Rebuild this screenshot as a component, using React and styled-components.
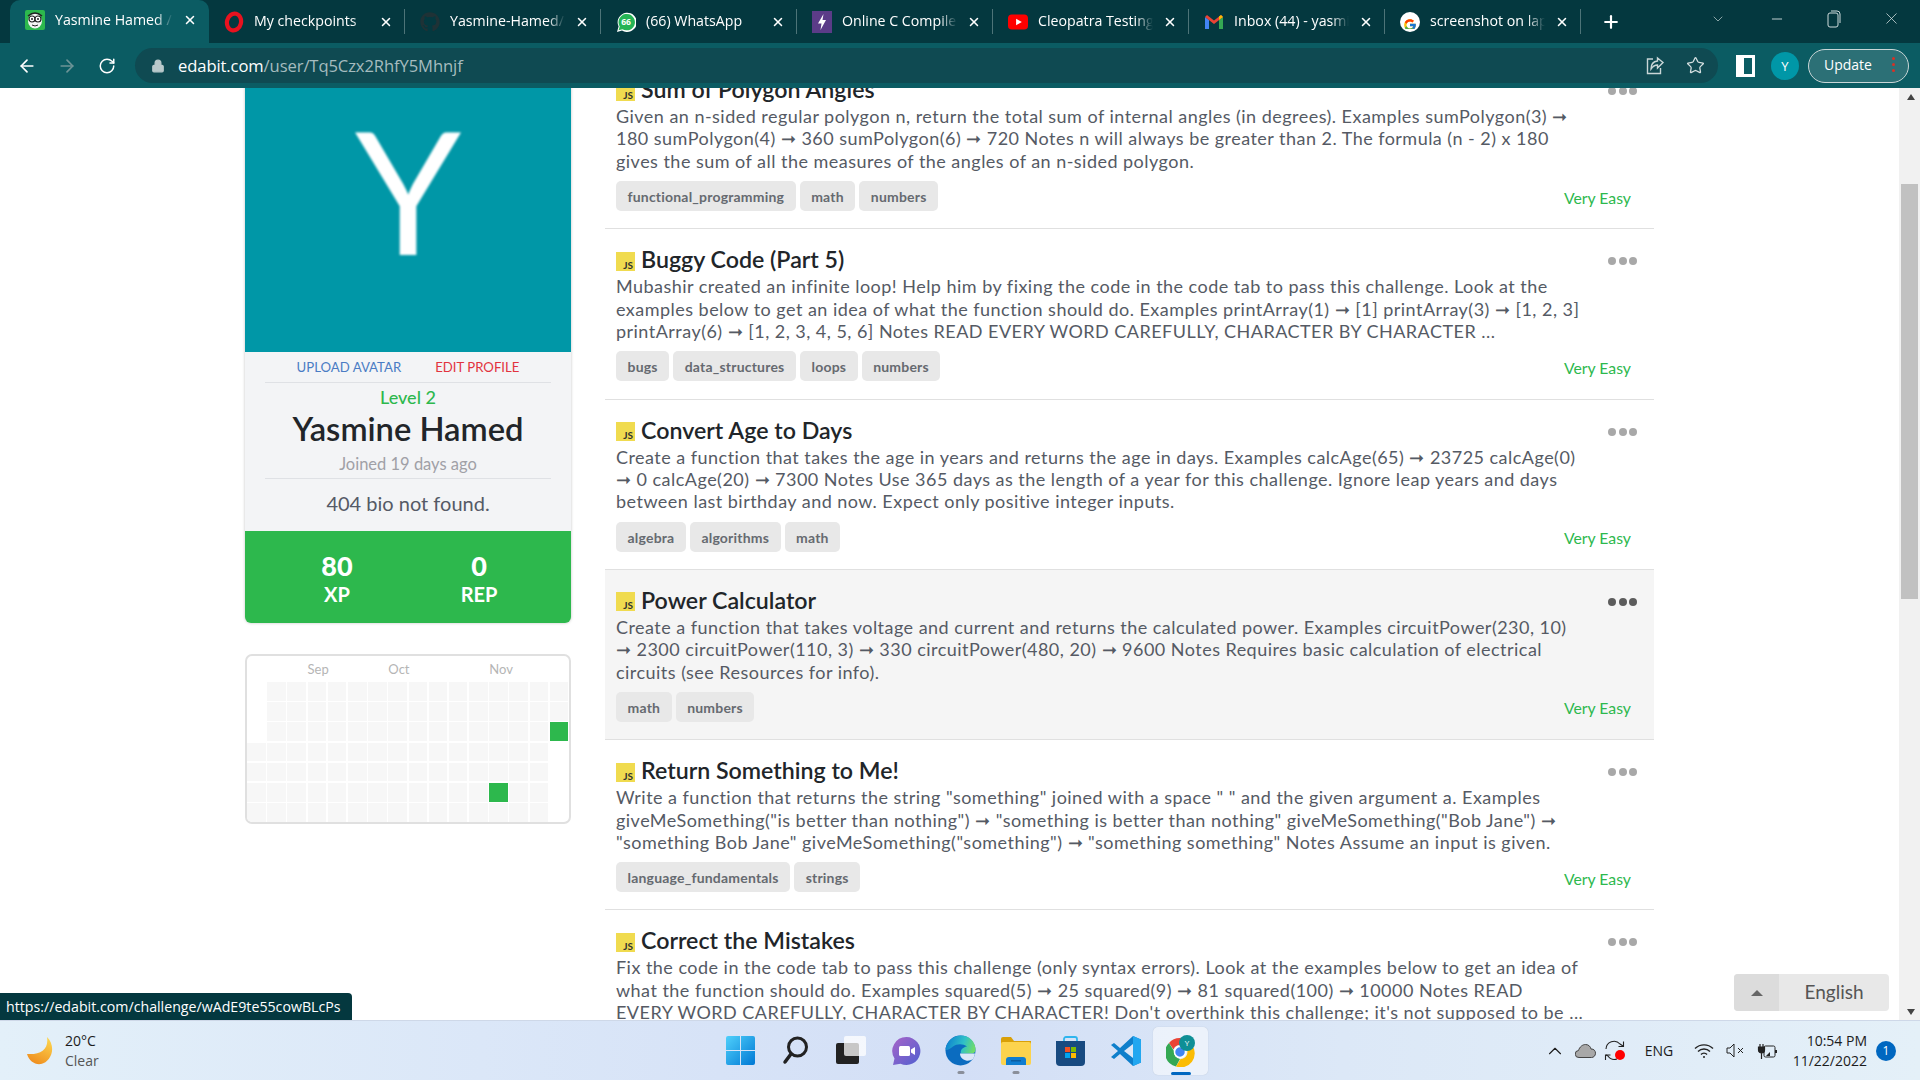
import React from "react";
import styled, { createGlobalStyle } from "styled-components";
import { ArrowLeft, ArrowRight, RotateCw, Lock, Star, Plus, X, Minus, ChevronDown, ChevronUp } from "lucide-react";
import { FaGithub } from "react-icons/fa";
import { FcGoogle } from "react-icons/fc";

const GlobalStyle = createGlobalStyle`
  html, body { margin: 0; padding: 0; height: 100%; overflow: hidden; background: #fff; }
  * { box-sizing: border-box; }
  body { font-family: Lato, "Liberation Sans", sans-serif; }
`;

const tabs = [
  { title: "Yasmine Hamed / Edabit", icon: "face", active: true },
  { title: "My checkpoints", icon: "opera" },
  { title: "Yasmine-Hamed/c-programs", icon: "github" },
  { title: "(66) WhatsApp", icon: "whatsapp" },
  { title: "Online C Compiler - online", icon: "bolt" },
  { title: "Cleopatra Testing - YouTube", icon: "youtube" },
  { title: "Inbox (44) - yasmine@gmail", icon: "gmail" },
  { title: "screenshot on laptop - Google", icon: "google" },
];

const challenges = [
  {
    title: "Sum of Polygon Angles",
    text: "Given an n-sided regular polygon n, return the total sum of internal angles (in degrees). Examples sumPolygon(3) ➞ 180 sumPolygon(4) ➞ 360 sumPolygon(6) ➞ 720 Notes n will always be greater than 2. The formula (n - 2) x 180 gives the sum of all the measures of the angles of an n-sided polygon.",
    tags: ["functional_programming", "math", "numbers"],
  },
  {
    title: "Buggy Code (Part 5)",
    text: "Mubashir created an infinite loop! Help him by fixing the code in the code tab to pass this challenge. Look at the examples below to get an idea of what the function should do. Examples printArray(1) ➞ [1] printArray(3) ➞ [1, 2, 3] printArray(6) ➞ [1, 2, 3, 4, 5, 6] Notes READ EVERY WORD CAREFULLY, CHARACTER BY CHARACTER ...",
    tags: ["bugs", "data_structures", "loops", "numbers"],
  },
  {
    title: "Convert Age to Days",
    text: "Create a function that takes the age in years and returns the age in days. Examples calcAge(65) ➞ 23725 calcAge(0) ➞ 0 calcAge(20) ➞ 7300 Notes Use 365 days as the length of a year for this challenge. Ignore leap years and days between last birthday and now. Expect only positive integer inputs.",
    tags: ["algebra", "algorithms", "math"],
  },
  {
    title: "Power Calculator",
    text: "Create a function that takes voltage and current and returns the calculated power. Examples circuitPower(230, 10) ➞ 2300 circuitPower(110, 3) ➞ 330 circuitPower(480, 20) ➞ 9600 Notes Requires basic calculation of electrical circuits (see Resources for info).",
    tags: ["math", "numbers"],
    hover: true,
  },
  {
    title: "Return Something to Me!",
    text: 'Write a function that returns the string "something" joined with a space " " and the given argument a. Examples giveMeSomething("is better than nothing") ➞ "something is better than nothing" giveMeSomething("Bob Jane") ➞ "something Bob Jane" giveMeSomething("something") ➞ "something something" Notes Assume an input is given.',
    tags: ["language_fundamentals", "strings"],
  },
  {
    title: "Correct the Mistakes",
    text: "Fix the code in the code tab to pass this challenge (only syntax errors). Look at the examples below to get an idea of what the function should do. Examples squared(5) ➞ 25 squared(9) ➞ 81 squared(100) ➞ 10000 Notes READ EVERY WORD CAREFULLY, CHARACTER BY CHARACTER! Don't overthink this challenge; it's not supposed to be ...",
    tags: ["bugs"],
  },
];

const Shell = styled.div`
  width: 1920px;
  height: 1080px;
  display: flex;
  flex-direction: column;
  position: relative;
  overflow: hidden;
`;

/* browser chrome */
const TabStrip = styled.div`
  height: 43px;
  background: #04383f;
  display: flex;
  align-items: flex-end;
  padding-left: 10px;
  font-family: "Open Sans", sans-serif;
  flex-shrink: 0;
`;
const Tab = styled.div`
  width: ${(p) => (p.$active ? "199px" : "196px")};
  height: ${(p) => (p.$active ? "43px" : "40px")};
  padding: 0 12px 3px 15px;
  display: flex;
  align-items: center;
  gap: 10px;
  color: #fff;
  position: relative;
  background: ${(p) => (p.$active ? "#0b5c63" : "transparent")};
  border-radius: ${(p) => (p.$active ? "10px 10px 0 0" : "0")};
  &::after {
    content: "";
    display: ${(p) => (p.$active ? "none" : "block")};
    position: absolute;
    right: 0;
    top: 6px;
    height: 25px;
    width: 1px;
    background: #4d7478;
  }
`;
const Favicon = styled.span`
  width: 20px;
  height: 20px;
  flex-shrink: 0;
  display: flex;
  align-items: center;
  justify-content: center;
`;
const TabTitle = styled.span`
  flex: 1;
  font-size: 14.2px;
  margin-top: -2px;
  white-space: nowrap;
  overflow: hidden;
  -webkit-mask-image: linear-gradient(to right, #000 85%, transparent 100%);
  mask-image: linear-gradient(to right, #000 85%, transparent 100%);
`;
const NewTab = styled.div`
  width: 46px;
  height: 40px;
  padding-bottom: 3px;
  display: flex;
  align-items: center;
  justify-content: center;
  margin-left: 7px;
  color: #fff;
`;
const WindowControls = styled.div`
  margin-left: auto;
  height: 43px;
  display: flex;
  align-items: center;
  color: #cfdcdd;
`;
const WindowButton = styled.div`
  width: ${(p) => p.$w || 57}px;
  display: flex;
  justify-content: center;
  margin-bottom: 6px;
`;
const Toolbar = styled.div`
  height: 45px;
  background: #0b5c63;
  display: flex;
  align-items: center;
  padding: 0 11px 0 7px;
  flex-shrink: 0;
  font-family: "Open Sans", sans-serif;
`;
const NavButton = styled.div`
  width: 40px;
  display: flex;
  justify-content: center;
  color: ${(p) => (p.$off ? "#6d9497" : "#fff")};
`;
const Omnibox = styled.div`
  margin-left: 8px;
  width: 1583px;
  height: 35px;
  border-radius: 18px;
  background: #0f4a52;
  display: flex;
  align-items: center;
  padding: 0 3px 0 16px;
`;
const Url = styled.div`
  margin-left: 13px;
  margin-top: -1px;
  font-size: 16.6px;
  color: #a5bcbf;
  flex: 1;
  letter-spacing: -0.1px;
  b {
    font-weight: 400;
    color: #fff;
  }
`;
const OmniIcon = styled.span`
  display: flex;
  width: 40px;
  justify-content: center;
  color: #d5e0e1;
`;
const PanelIcon = styled.span`
  width: 19px;
  height: 22px;
  margin-left: 18px;
  border: solid #fff;
  border-width: 3px 3px 3px 8px;
  margin-right: 16px;
`;
const Avatar = styled.div`
  width: 28px;
  height: 28px;
  border-radius: 50%;
  background: #0097a7;
  color: #fff;
  font-size: 13px;
  display: flex;
  align-items: center;
  justify-content: center;
`;
const UpdateButton = styled.div`
  margin-left: 9px;
  width: 101px;
  height: 34px;
  border: 1px solid #c9d6d7;
  border-radius: 17px;
  background: #2c7076;
  color: #fff;
  font-size: 14px;
  display: flex;
  align-items: center;
  justify-content: space-between;
  padding: 0 13px 2px 15px;
`;
const RedDots = styled.span`
  display: flex;
  flex-direction: column;
  gap: 3px;
  i {
    width: 3px;
    height: 3px;
    border-radius: 50%;
    background: #d93025;
  }
`;

/* page */
const Page = styled.div`
  flex: 1;
  min-height: 0;
  display: flex;
  overflow: hidden;
`;
const Content = styled.div`
  width: 1899px;
  display: flex;
  align-items: flex-start;
  padding-left: 245px;
`;
const Sidebar = styled.aside`
  width: 326px;
  margin-top: -62px;
  flex-shrink: 0;
`;
const ProfileCard = styled.div`
  background: #f3f4f6;
  border-radius: 0 0 6px 6px;
  box-shadow: 0 0 3px rgba(0, 0, 0, 0.25);
  overflow: hidden;
  text-align: center;
`;
const AvatarTile = styled.div`
  height: 326px;
  background: #0097a7;
  color: #fff;
  font-size: 170px;
  line-height: 1;
  font-weight: 400;
  display: flex;
  align-items: center;
  justify-content: center;
  span {
    filter: blur(0.8px);
    display: block;
  }
`;
const LinkRow = styled.div`
  height: 31px;
  margin: 0 20px;
  border-bottom: 1px solid #dfe1e5;
  display: flex;
  justify-content: center;
  gap: 34px;
  align-items: center;
  font-size: 13.2px;
`;
const CardLink = styled.a`
  color: ${(p) => p.$color};
`;
const LevelText = styled.div`
  color: #2db84d;
  font-size: 18px;
  font-weight: 500;
  line-height: 20px;
  margin-top: 4px;
  padding-bottom: 1px;
`;
const UserName = styled.div`
  color: #212529;
  font-size: 32.7px;
  font-weight: 600;
  line-height: 40px;
  margin-top: 1px;
`;
const Joined = styled.div`
  color: #a0a0a6;
  font-size: 16.5px;
  line-height: 20px;
  margin: 5px 20px 0;
  padding-bottom: 3px;
  border-bottom: 1px solid #dfe1e5;
  height: 25px;
`;
const Bio = styled.div`
  color: #555a66;
  font-size: 20px;
  height: 52px;
  padding-bottom: 4px;
  display: flex;
  align-items: center;
  justify-content: center;
`;
const StatsBar = styled.div`
  height: 92px;
  background: #2db84d;
  color: #fff;
  display: flex;
  justify-content: center;
  align-items: center;
  font-weight: 700;
  padding-top: 3px;
`;
const Stat = styled.div`
  width: 142px;
  text-align: center;
  strong {
    display: block;
    font-size: 27px;
    line-height: 30px;
  }
  span {
    display: block;
    font-size: 20px;
    line-height: 26px;
  }
`;
const Calendar = styled.div`
  margin-top: 31px;
  height: 170px;
  border: 2px solid #e0e0e0;
  border-radius: 7px;
  background: #fff;
  overflow: hidden;
`;
const MonthRow = styled.div`
  height: 26px;
  display: grid;
  grid-template-columns: repeat(16, 18.6px);
  column-gap: 1.6px;
  align-items: center;
  color: #b5b5b5;
  font-size: 13px;
`;
const Month = styled.span`
  grid-column: ${(p) => p.$col} / span 3;
`;
const CellGrid = styled.div`
  display: grid;
  grid-template-rows: repeat(7, 18.6px);
  grid-template-columns: repeat(16, 18.6px);
  grid-auto-flow: column;
  gap: 1.6px;
`;
const Cell = styled.i`
  display: block;
  background: ${(p) => (p.$empty ? "transparent" : p.$on ? "#2db84d" : "#f7f7f7")};
`;
const List = styled.main`
  width: 1049px;
  margin-left: 34px;
  margin-top: -29px;
  flex-shrink: 0;
`;
const Row = styled.article`
  height: 170.3px;
  border-bottom: 1px solid #e0e0e0;
  padding: 16px 23px 0 11px;
  background: ${(p) => (p.$hover ? "#f5f5f5" : "#fff")};
  position: relative;
`;
const TitleLine = styled.div`
  display: flex;
  align-items: center;
  height: 30px;
  gap: 6px;
`;
const JsBadge = styled.span`
  width: 19px;
  height: 19px;
  background: #f0db4f;
  color: #323330;
  font-size: 10px;
  font-weight: 700;
  line-height: 12px;
  display: flex;
  align-items: flex-end;
  justify-content: flex-end;
  padding: 0 2px 0 0;
  margin-top: 2px;
`;
const Title = styled.h3`
  margin: -2px 0 0;
  font-size: 23.2px;
  font-weight: 600;
  color: #212529;
`;
const Dots = styled.div`
  position: absolute;
  right: 17px;
  top: 28px;
  display: flex;
  gap: 2.5px;
  i {
    width: 8px;
    height: 8px;
    border-radius: 50%;
    background: ${(p) => (p.$dark ? "#5c5c5c" : "#a8a8a8")};
  }
`;
const Description = styled.p`
  margin: 0;
  width: 968px;
  font-size: 18px;
  letter-spacing: 0.47px;
  line-height: 22.4px;
  color: #555a64;
  height: 68px;
  overflow: hidden;
`;
const Footer = styled.div`
  margin-top: 8px;
  display: flex;
  align-items: center;
`;
const Tag = styled.span`
  height: 30px;
  line-height: 31px;
  padding: 0 11.5px;
  margin-right: 4px;
  background: #e8e8e8;
  border-radius: 5px;
  font-size: 14px;
  letter-spacing: 0.2px;
  font-weight: 700;
  color: #666a70;
`;
const Difficulty = styled.span`
  margin-left: auto;
  margin-top: 2px;
  color: #2db84d;
  font-size: 15.8px;
`;
const Scrollbar = styled.div`
  width: 21px;
  background: #f1f1f1;
  display: flex;
  flex-direction: column;
  align-items: center;
  padding: 0 0 0 2px;
`;
const ScrollArrow = styled.div`
  height: 17px;
  display: flex;
  align-items: center;
  justify-content: center;
  flex-shrink: 0;
  &::before {
    content: "";
    border-left: 4.5px solid transparent;
    border-right: 4.5px solid transparent;
    border-${(p) => (p.$down ? "top" : "bottom")}: 6px solid #444;
  }
`;
const ScrollTrack = styled.div`
  flex: 1;
  width: 100%;
`;
const ScrollThumb = styled.div`
  margin-top: 79px;
  height: 415px;
  background: #c1c1c1;
  width: 17px;
`;
const StatusBubble = styled.div`
  position: absolute;
  left: 0;
  top: 993px;
  width: 352px;
  height: 27px;
  background: #04383f;
  color: #fff;
  font-family: "Open Sans", sans-serif;
  font-size: 14.2px;
  line-height: 27px;
  padding-left: 6px;
  border-radius: 0 4px 0 0;
  white-space: nowrap;
`;
const LanguagePicker = styled.div`
  position: absolute;
  left: 1734px;
  top: 974px;
  width: 155px;
  height: 37px;
  display: flex;
  border-radius: 4px;
  overflow: hidden;
  background: #e8e8e8;
  color: #555;
  font-size: 19px;
`;
const LangArrow = styled.div`
  width: 45px;
  background: #dcdcdc;
  display: flex;
  align-items: center;
  justify-content: center;
  &::before {
    content: "";
    border-left: 6px solid transparent;
    border-right: 6px solid transparent;
    border-bottom: 6px solid #666;
  }
`;
const LangName = styled.div`
  flex: 1;
  display: flex;
  align-items: center;
  justify-content: center;
  padding-bottom: 2px;
`;

/* taskbar */
const Taskbar = styled.footer`
  height: 60px;
  flex-shrink: 0;
  background: linear-gradient(90deg, #e3f0f9 0%, #dbe7f8 25%, #d3dff6 50%, #dce8f7 70%, #e4f0f8 100%);
  border-top: 1px solid #ced8e8;
  display: flex;
  align-items: center;
  font-family: "Open Sans", sans-serif;
  color: #1c1c1c;
`;
const Weather = styled.div`
  width: 713px;
  padding-left: 27px;
  display: flex;
  align-items: center;
  gap: 10px;
  font-size: 14px;
  line-height: 20px;
  span {
    display: block;
  }
  span + span {
    color: #555;
  }
`;
const TaskIcons = styled.div`
  display: flex;
`;
const TaskIcon = styled.div`
  width: 55px;
  height: 48px;
  display: flex;
  align-items: center;
  justify-content: center;
  position: relative;
  border-radius: 5px;
  background: ${(p) => (p.$active ? "rgba(255,255,255,.5)" : "transparent")};
  box-shadow: ${(p) => (p.$active ? "0 0 1px rgba(0,0,0,.2)" : "none")};
`;
const RunDot = styled.i`
  position: absolute;
  bottom: ${(p) => (p.$active ? "0" : "1px")};
  left: 50%;
  transform: translateX(-50%);
  height: 3px;
  border-radius: 2px;
  width: ${(p) => (p.$active ? "20px" : "7px")};
  background: ${(p) => (p.$active ? "#0067c0" : "#8a8f9a")};
`;
const Tray = styled.div`
  margin-left: auto;
  display: flex;
  align-items: center;
  padding-right: 24px;
`;
const TrayCell = styled.div`
  width: ${(p) => p.$w || 30}px;
  display: flex;
  justify-content: center;
  align-items: center;
  font-size: 14px;
`;
const Clock = styled.div`
  width: 85px;
  text-align: right;
  font-size: 14px;
  line-height: 20px;
`;
const Notification = styled.div`
  margin-left: 9px;
  width: 20px;
  height: 20px;
  border-radius: 50%;
  background: #0067c0;
  color: #fff;
  font-size: 12px;
  display: flex;
  align-items: center;
  justify-content: center;
`;

function TabIcon({ name }) {
  if (name === "face")
    return (
      <svg width="20" height="20" viewBox="0 0 20 20">
        <rect width="20" height="20" rx="2" fill="#2db84d" />
        <ellipse cx="10" cy="11" rx="7" ry="7.5" fill="#f4f4f4" />
        <circle cx="7" cy="9" r="3" fill="#fff" stroke="#222" strokeWidth="1.2" />
        <circle cx="13" cy="9" r="3" fill="#fff" stroke="#222" strokeWidth="1.2" />
        <circle cx="7" cy="9" r="1" fill="#222" />
        <circle cx="13" cy="9" r="1" fill="#222" />
        <path d="M7 15q3 2 6 0" stroke="#222" fill="none" />
        <path d="M3 6q7-6 14 0" stroke="#222" strokeWidth="1.5" fill="none" />
      </svg>
    );
  if (name === "opera")
    return (
      <svg width="20" height="22" viewBox="0 0 20 22">
        <ellipse cx="10" cy="11" rx="7" ry="8.5" fill="none" stroke="#e8121f" strokeWidth="4.2" transform="rotate(14 10 11)" />
      </svg>
    );
  if (name === "github") return <FaGithub size={20} color="#1f3236" />;
  if (name === "whatsapp")
    return (
      <svg width="20" height="22" viewBox="0 0 20 22">
        <path d="M1 21l1.6-5.4A9.6 9.6 0 1 1 6 19.4z" fill="#fff" />
        <path d="M2.6 19.3l1.1-3.9A8.2 8.2 0 1 1 6.5 18.2z" fill="#25b455" />
        <text x="10" y="13.5" fontSize="8.5" fontFamily="Open Sans" fontWeight="700" fill="#fff" textAnchor="middle">66</text>
      </svg>
    );
  if (name === "bolt")
    return (
      <svg width="20" height="22" viewBox="0 0 20 22">
        <rect width="20" height="22" fill="#5b3c88" />
        <path d="M11.5 3L6 12.5h3.5L8.5 19l5.5-10h-3.5z" fill="#fff" />
      </svg>
    );
  if (name === "youtube")
    return (
      <svg width="21" height="20" viewBox="0 0 21 20">
        <rect y="2" width="21" height="16" rx="4" fill="#f00" />
        <path d="M8.5 6.5v7l6-3.5z" fill="#fff" />
      </svg>
    );
  if (name === "gmail")
    return (
      <svg width="20" height="20" viewBox="0 0 20 20">
        <path d="M1 17V5l4 3v9z" fill="#4285f4" />
        <path d="M15 17V8l4-3v12z" fill="#34a853" />
        <path d="M1 5l2-2 7 5.5L17 3l2 2-9 7z" fill="#ea4335" />
        <path d="M15 8l4-3-2-2-2 1.5z" fill="#fbbc04" />
      </svg>
    );
  return (
    <svg width="20" height="20" viewBox="0 0 20 20">
      <circle cx="10" cy="10" r="10" fill="#fff" />
      <foreignObject x="3" y="3" width="14" height="14">
        <FcGoogle size={14} />
      </foreignObject>
    </svg>
  );
}

function ShareIcon() {
  return (
    <svg width="20" height="20" viewBox="0 0 20 20" fill="none" stroke="#c9d6d7" strokeWidth="1.4">
      <path d="M8 3H2.5v14.5h13V12" />
      <path d="M18 6.5L12.5 2v3C8 5.5 6 9 6 13c2-3 3.5-4 6.500-4v3z" />
    </svg>
  );
}

function RestoreIcon() {
  return (
    <svg width="14" height="18" viewBox="0 0 14 18" fill="none" stroke="#cfdcdd" strokeWidth="1">
      <rect x="1" y="3" width="10" height="14" rx="2" />
      <path d="M4 1h6a3 3 0 0 1 3 3v9" />
    </svg>
  );
}

function WindowsLogo() {
  return (
    <svg width="29" height="29" viewBox="0 0 29 29">
      <defs>
        <linearGradient id="winA" x1="0" y1="0" x2="1" y2="1">
          <stop offset="0" stopColor="#4fd0fb" />
          <stop offset="1" stopColor="#0078d4" />
        </linearGradient>
      </defs>
      <path d="M0 2a2 2 0 0 1 2-2h12v14H0zM15 0h12a2 2 0 0 1 2 2v12H15zM0 15h14v14H2a2 2 0 0 1-2-2zM15 15h14v12a2 2 0 0 1-2 2H15z" fill="url(#winA)" />
    </svg>
  );
}

function SearchIcon() {
  return (
    <svg width="27" height="29" viewBox="0 0 27 29" fill="none">
      <circle cx="15.500" cy="11" r="9" stroke="#222" strokeWidth="3" />
      <path d="M9 18l-6 8" stroke="#222" strokeWidth="3.500" strokeLinecap="round" />
    </svg>
  );
}

function TaskViewIcon() {
  return (
    <svg width="30" height="29" viewBox="0 0 30 29">
      <rect x="0" y="7" width="23" height="21" rx="2" fill="#222" />
      <rect x="8" y="0" width="22" height="20" rx="2" fill="#fff" opacity="0.75" />
    </svg>
  );
}

function MeetIcon() {
  return (
    <svg width="30" height="30" viewBox="0 0 30 30">
      <defs>
        <linearGradient id="meetA" x1="0" y1="0" x2="1" y2="1">
          <stop offset="0" stopColor="#a864c8" />
          <stop offset="1" stopColor="#5060d0" />
        </linearGradient>
      </defs>
      <path d="M15.500 1a14 14 0 1 1-6 26.700L2 29l1.500-6.500A14 14 0 0 1 15.500 1z" fill="url(#meetA)" />
      <rect x="8" y="10" width="11" height="10" rx="1.500" fill="#fff" />
      <path d="M20 13.500l4-2.500v8l-4-2.500z" fill="#fff" />
    </svg>
  );
}

function EdgeIcon() {
  return (
    <svg width="31" height="31" viewBox="0 0 31 31">
      <defs>
        <linearGradient id="edgeA" x1="0" y1="0.300" x2="1" y2="0.500">
          <stop offset="0" stopColor="#0c7fd0" />
          <stop offset="0.6" stopColor="#2fc0c8" />
          <stop offset="1" stopColor="#6fdc6a" />
        </linearGradient>
      </defs>
      <circle cx="15.500" cy="15.500" r="15" fill="#0b6cc0" />
      <path d="M0.500 14C2 6 8 0.500 16 0.500c8 0 14.500 6 14.500 14 0 2.500-1.500 4-3.500 4H16c-1-3 1.500-6.500 6-7-4-3-10-3-14 0-3 2-6 5-7.500 2.500z" fill="url(#edgeA)" />
      <path d="M15 18.500h15c-.3 2-1 4-2 5.500-2 1.500-5 2-7 1.500-3.500-.8-6-3.500-6-7z" fill="#dbe7f8" />
    </svg>
  );
}

function FolderIcon() {
  return (
    <svg width="30" height="28" viewBox="0 0 30 28">
      <path d="M0 2a2 2 0 0 1 2-2h8l3 4h17v5H0z" fill="#d9a008" />
      <rect y="5" width="30" height="23" rx="2" fill="#fcd34d" />
      <path d="M5 23a3 3 0 0 1 3-3h14a3 3 0 0 1 3 3v5H5z" fill="#0f7dd0" />
      <rect x="10" y="23" width="10" height="1.500" fill="#0b5da0" />
    </svg>
  );
}

function StoreIcon() {
  return (
    <svg width="29" height="30" viewBox="0 0 29 30">
      <path d="M8 6V3a2 2 0 0 1 2-2h9a2 2 0 0 1 2 2v3" fill="none" stroke="#2fb5ee" strokeWidth="1.800" />
      <path d="M0 5h29v21a4 4 0 0 1-4 4H4a4 4 0 0 1-4-4z" fill="#184a80" />
      <rect x="9" y="11" width="5" height="5" fill="#f25022" />
      <rect x="15" y="11" width="5" height="5" fill="#7fba00" />
      <rect x="9" y="17" width="5" height="5" fill="#00a4ef" />
      <rect x="15" y="17" width="5" height="5" fill="#ffb900" />
    </svg>
  );
}

function VsCodeIcon() {
  return (
    <svg width="30" height="30" viewBox="0 0 30 30">
      <path d="M22 0l8 3.500v23L22 30 9 18 3 23l-3-2 7-6-7-6 3-2 6 5z" fill="#0e7fcb" />
      <path d="M22 0l8 3.500v23L22 30z" fill="#22a7f0" />
      <path d="M22 8l-9 7 9 7z" fill="#dbe7f8" />
    </svg>
  );
}

function ChromeIcon() {
  return (
    <svg width="30" height="32" viewBox="0 0 30 32">
      <g transform="translate(0 3)">
        <path d="M14 0a14 14 0 0 1 12 7H14a7 7 0 0 0-6.500 4.500L3 5A14 14 0 0 1 14 0z" fill="#ea4335" />
        <path d="M3 5l5 8a7 7 0 0 0 6 8l-4 7.500A14 14 0 0 1 3 5z" fill="#34a853" />
        <path d="M26 7a14 14 0 0 1-16 21.500L14.500 21a7 7 0 0 0 6-10.500z" fill="#fbbc04" />
        <circle cx="14" cy="14" r="5.500" fill="#4285f4" stroke="#fff" strokeWidth="1.500" />
      </g>
      <circle cx="21" cy="8" r="8" fill="#0e8f96" />
      <text x="21" y="11" fontSize="8" textAnchor="middle" fill="#fff" fontFamily="Open Sans">Y</text>
    </svg>
  );
}

function MoonIcon() {
  return (
    <svg width="28" height="28" viewBox="0 0 28 28">
      <defs>
        <linearGradient id="moonA" x1="0.700" y1="0" x2="0.200" y2="1">
          <stop offset="0" stopColor="#fcd34d" />
          <stop offset="1" stopColor="#ee8a1c" />
        </linearGradient>
      </defs>
      <path d="M20 0c2 12-6 18-20 17 2 7 8 11 14 10C24 25 30 10 20 0z" fill="url(#moonA)" />
    </svg>
  );
}

function CloudIcon() {
  return (
    <svg width="21" height="14" viewBox="0 0 21 14">
      <path d="M4 13.500a3.500 3.500 0 0 1-.5-7C4.500 3 7.500.500 10.500.500c3 0 5 2 5.500 4.500 3-.2 4.500 2 4.500 4.200 0 2.500-1.800 4.300-4 4.300z" fill="#a8a8a8" stroke="#444" />
    </svg>
  );
}

function SyncIcon() {
  return (
    <svg width="22" height="22" viewBox="0 0 22 22" fill="none" stroke="#222" strokeWidth="1.100">
      <path d="M2 9a8 8 0 0 1 14-5l3 2" />
      <path d="M19.500 1.500V6.500h-5" />
      <path d="M13 19a8 8 0 0 1-9-3l-2-1" />
      <path d="M1.500 20v-5h5" />
      <circle cx="16" cy="15" r="5" fill="#f00" stroke="none" />
    </svg>
  );
}

function WifiIcon() {
  return (
    <svg width="20" height="16" viewBox="0 0 20 16" fill="none" stroke="#222" strokeWidth="1.400">
      <path d="M1 5.500a13 13 0 0 1 18 0" />
      <path d="M4 8.500a8.500 8.500 0 0 1 12 0" />
      <path d="M7 11.500a4 4 0 0 1 6 0" />
      <circle cx="10" cy="14" r="1" fill="#222" stroke="none" />
    </svg>
  );
}

function VolumeIcon() {
  return (
    <svg width="20" height="15" viewBox="0 0 20 15" fill="none" stroke="#222" strokeWidth="1">
      <path d="M1 5h3l4-4v13l-4-4H1z" />
      <path d="M12 5l5 5M17 5l-5 5" />
    </svg>
  );
}

function BatteryIcon() {
  return (
    <svg width="20" height="18" viewBox="0 0 20 18">
      <path d="M3 2v3M6 2v3M1.500 5h6v3a3 3 0 0 1-6 0zM4.500 11v6" stroke="#222" strokeWidth="1.200" fill="none" />
      <path d="M1.500 5h6v3a3 3 0 0 1-6 0z" fill="#222" />
      <rect x="7" y="4" width="11" height="11" rx="1.500" fill="none" stroke="#222" />
      <rect x="18" y="8" width="2" height="3" fill="#222" />
      <path d="M9 14l4-4v4z" fill="#222" />
    </svg>
  );
}

const hasCell = (col, row) => {
  if (col === 0) return row >= 3;
  if (col === 15) return row <= 2;
  return true;
};
const isActive = (col, row) => (col === 15 && row === 2) || (col === 12 && row === 5);

const cells = [];
for (let col = 0; col < 16; col++) {
  for (let row = 0; row < 7; row++) {
    cells.push({ key: col + "-" + row, empty: !hasCell(col, row), on: isActive(col, row) });
  }
}

const taskApps = [
  { key: "win", icon: <WindowsLogo /> },
  { key: "search", icon: <SearchIcon /> },
  { key: "view", icon: <TaskViewIcon /> },
  { key: "meet", icon: <MeetIcon /> },
  { key: "edge", icon: <EdgeIcon />, running: true },
  { key: "files", icon: <FolderIcon />, running: true },
  { key: "store", icon: <StoreIcon /> },
  { key: "code", icon: <VsCodeIcon /> },
  { key: "chrome", icon: <ChromeIcon />, active: true },
];

export default function App() {
  return (
    <Shell>
      <GlobalStyle />
      <TabStrip>
        {tabs.map((t) => (
          <Tab key={t.title} $active={t.active}>
            <Favicon>
              <TabIcon name={t.icon} />
            </Favicon>
            <TabTitle>{t.title}</TabTitle>
            <X size={14} strokeWidth={2.6} color="#fff" />
          </Tab>
        ))}
        <NewTab>
          <Plus size={20} strokeWidth={2.6} />
        </NewTab>
        <WindowControls>
          <WindowButton $w={60}>
            <ChevronDown size={16} strokeWidth={1} />
          </WindowButton>
          <WindowButton>
            <Minus size={16} strokeWidth={1.4} />
          </WindowButton>
          <WindowButton>
            <RestoreIcon />
          </WindowButton>
          <WindowButton $w={58}>
            <X size={19} strokeWidth={1} />
          </WindowButton>
        </WindowControls>
      </TabStrip>
      <Toolbar>
        <NavButton>
          <ArrowLeft size={20} strokeWidth={2} />
        </NavButton>
        <NavButton $off>
          <ArrowRight size={20} strokeWidth={2} />
        </NavButton>
        <NavButton>
          <RotateCw size={18} strokeWidth={2} />
        </NavButton>
        <Omnibox>
          <Lock size={14} color="#b9c9cb" fill="#b9c9cb" />
          <Url>
            <b>edabit.com</b>/user/Tq5Czx2RhfY5Mhnjf
          </Url>
          <OmniIcon>
            <ShareIcon />
          </OmniIcon>
          <OmniIcon>
            <Star size={19} strokeWidth={1.6} />
          </OmniIcon>
        </Omnibox>
        <PanelIcon />
        <Avatar>Y</Avatar>
        <UpdateButton>
          Update
          <RedDots>
            <i />
            <i />
            <i />
          </RedDots>
        </UpdateButton>
      </Toolbar>

      <Page>
        <Content>
          <Sidebar>
            <ProfileCard>
              <AvatarTile>
                <span>Y</span>
              </AvatarTile>
              <LinkRow>
                <CardLink $color="#4a7cc4">UPLOAD AVATAR</CardLink>
                <CardLink $color="#e2333f">EDIT PROFILE</CardLink>
              </LinkRow>
              <LevelText>Level 2</LevelText>
              <UserName>Yasmine Hamed</UserName>
              <Joined>Joined 19 days ago</Joined>
              <Bio>404 bio not found.</Bio>
              <StatsBar>
                <Stat>
                  <strong>80</strong>
                  <span>XP</span>
                </Stat>
                <Stat>
                  <strong>0</strong>
                  <span>REP</span>
                </Stat>
              </StatsBar>
            </ProfileCard>
            <Calendar>
              <MonthRow>
                <Month $col={4}>Sep</Month>
                <Month $col={8}>Oct</Month>
                <Month $col={13}>Nov</Month>
              </MonthRow>
              <CellGrid>
                {cells.map((c) => (
                  <Cell key={c.key} $empty={c.empty} $on={c.on} />
                ))}
              </CellGrid>
            </Calendar>
          </Sidebar>
          <List>
            {challenges.map((c) => (
              <Row key={c.title} $hover={c.hover}>
                <TitleLine>
                  <JsBadge>JS</JsBadge>
                  <Title>{c.title}</Title>
                </TitleLine>
                <Dots $dark={c.hover}>
                  <i />
                  <i />
                  <i />
                </Dots>
                <Description>{c.text}</Description>
                <Footer>
                  {c.tags.map((tag) => (
                    <Tag key={tag}>{tag}</Tag>
                  ))}
                  <Difficulty>Very Easy</Difficulty>
                </Footer>
              </Row>
            ))}
          </List>
        </Content>
        <Scrollbar>
          <ScrollArrow />
          <ScrollTrack>
            <ScrollThumb />
          </ScrollTrack>
          <ScrollArrow $down />
        </Scrollbar>
      </Page>

      <StatusBubble>https://edabit.com/challenge/wAdE9te55cowBLcPs</StatusBubble>
      <LanguagePicker>
        <LangArrow />
        <LangName>English</LangName>
      </LanguagePicker>

      <Taskbar>
        <Weather>
          <MoonIcon />
          <div>
            <span>20°C</span>
            <span>Clear</span>
          </div>
        </Weather>
        <TaskIcons>
          {taskApps.map((a) => (
            <TaskIcon key={a.key} $active={a.active}>
              {a.icon}
              {(a.running || a.active) && <RunDot $active={a.active} />}
            </TaskIcon>
          ))}
        </TaskIcons>
        <Tray>
          <TrayCell>
            <ChevronUp size={22} strokeWidth={1.2} />
          </TrayCell>
          <TrayCell>
            <CloudIcon />
          </TrayCell>
          <TrayCell>
            <SyncIcon />
          </TrayCell>
          <TrayCell $w={58}>ENG</TrayCell>
          <TrayCell $w={32}>
            <WifiIcon />
          </TrayCell>
          <TrayCell $w={32}>
            <VolumeIcon />
          </TrayCell>
          <TrayCell>
            <BatteryIcon />
          </TrayCell>
          <Clock>
            10:54 PM
            <br />
            11/22/2022
          </Clock>
          <Notification>1</Notification>
        </Tray>
      </Taskbar>
    </Shell>
  );
}
